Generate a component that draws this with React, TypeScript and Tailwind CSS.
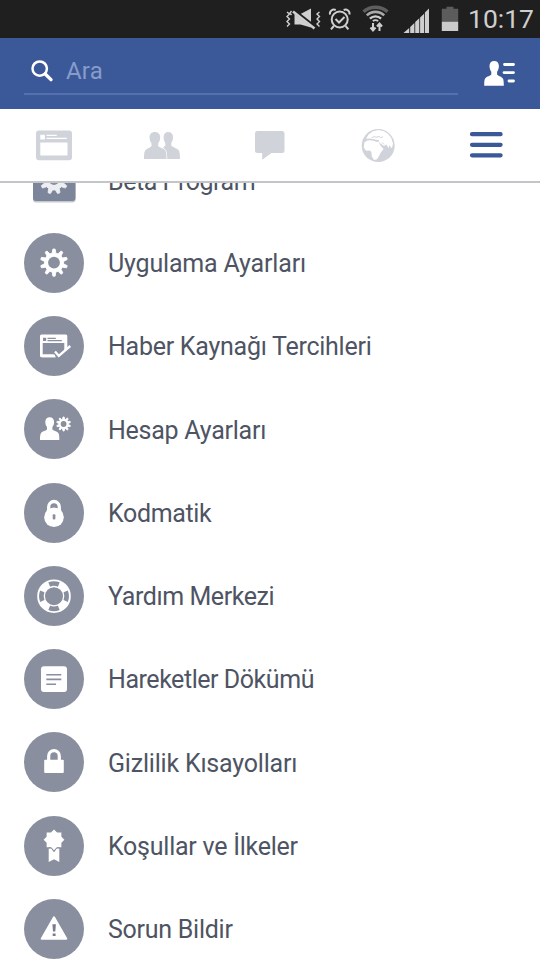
import type { ReactNode } from "react";

interface GearProps {
    cx: number;
    cy: number;
    outer: number;
    body: number;
    hole: number;
    teeth: number;
    color?: string;
}

const point = (cx: number, cy: number, r: number, a: number) =>
    `${(cx + r * Math.sin(a)).toFixed(2)},${(cy - r * Math.cos(a)).toFixed(2)}`;

function Gear({ cx, cy, outer, body, hole, teeth, color = "#fff" }: GearProps) {
    const step = (Math.PI * 2) / teeth;
    const points: string[] = [];
    for (let i = 0; i < teeth; i++) {
        const a = i * step;
        points.push(point(cx, cy, body, a - step * 0.3));
        points.push(point(cx, cy, outer, a - step * 0.13));
        points.push(point(cx, cy, outer, a + step * 0.13));
        points.push(point(cx, cy, body, a + step * 0.3));
    }
    return <g>
        <polygon points={points.join(" ")} fill={color} stroke={color} strokeWidth="0.9" strokeLinejoin="round" />
        <circle cx={cx} cy={cy} r={hole} fill="#898f9e" />
    </g>
}

function Star() {
    const points = Array.from({ length: 16 }, (_, i) => point(30, 23.8, i % 2 ? 8 : 10.4, (i * Math.PI) / 8));
    return <polygon points={points.join(" ")} fill="#fff" />
}

interface Item {
    label: string;
    tracking: string;
    icon: ReactNode;
}

const items: Item[] = [
    {
        label: "Uygulama Ayarları",
        tracking: "tracking-[-0.17px]",
        icon: <Gear cx={30} cy={29.6} outer={13.6} body={9.6} hole={5.9} teeth={10} />,
    },
    {
        label: "Haber Kaynağı Tercihleri",
        tracking: "tracking-[-0.26px]",
        icon: <>
            <rect x="16" y="18.6" width="27.3" height="22.7" rx="1.5" fill="#fff" />
            <path d="M18.7 27h21.6v11.6H18.7zM19 21.8h3.2V25H19zM23.5 21.7h8.3v1.2h-8.3zM23.5 24.1h14.3v1.2H23.5z" fill="#898f9e" />
            <path d="M29.5 34l5.2 5.8L47 29.4V37L41 43h-9z" fill="#898f9e" />
            <path d="M31 35.4l3.8 4.4L46.3 30" fill="none" stroke="#fff" strokeWidth="2.3" />
            <path d="M18 41.3h13.8l-2.4-2.7H18z" fill="#fff" />
        </>,
    },
    {
        label: "Hesap Ayarları",
        tracking: "tracking-[-0.25px]",
        icon: <>
            <path d="M25.7 18.2c2.7 0 4.4 1.7 4.4 4.6 0 2.4-.8 4.2-1.7 5.3v2.4c.4 1 4.500 1.700 5.900 3.500 1 1.300 1 4.600 1 7H16c0-2.400 0-5.700 1.100-7 1.400-1.800 5.500-2.500 5.900-3.500v-2.400c-.9-1.100-1.700-2.900-1.700-5.300 0-2.900 1.700-4.600 4.400-4.600z" fill="#fff" />
            <Gear cx={39.6} cy={25} outer={7} body={5} hole={2.9} teeth={10} />
        </>,
    },
    {
        label: "Kodmatik",
        tracking: "tracking-[-0.36px]",
        icon: <>
            <path d="M24.7 29v-5.2a5.3 5.3 0 0 1 10.6 0V29" fill="none" stroke="#fff" strokeWidth="3.3" />
            <circle cx="30" cy="34.3" r="9.8" fill="#fff" />
            <rect x="28.7" y="31.3" width="2.7" height="5.2" rx="1" fill="#898f9e" />
        </>,
    },
    {
        label: "Yardım Merkezi",
        tracking: "tracking-[-0.42px]",
        icon: <>
            <circle cx="30" cy="30.2" r="12.9" fill="none" stroke="#fff" strokeWidth="7.8" />
            {[0, 90, 180, 270].map((angle) => (
                <path key={angle} d="M25.2 18.5a12.6 12.6 0 0 1 9.6 0" transform={`rotate(${angle} 30 30.2)`} fill="none" stroke="#898f9e" strokeWidth="4.6" />
            ))}
        </>,
    },
    {
        label: "Hareketler Dökümü",
        tracking: "tracking-[-0.45px]",
        icon: <>
            <rect x="17" y="17.3" width="26" height="25.6" rx="3" fill="#fff" />
            <path d="M22.3 25.7h15M22.3 30.4h15M22.3 35.2h9.7" stroke="#898f9e" strokeWidth="1.6" />
        </>,
    },
    {
        label: "Gizlilik Kısayolları",
        tracking: "tracking-[-0.2px]",
        icon: <>
            <path d="M24.7 28.5v-4.6a5.3 5.3 0 0 1 10.6 0v4.6" fill="none" stroke="#fff" strokeWidth="3.2" />
            <rect x="20.2" y="27.7" width="19.6" height="13.4" rx="1" fill="#fff" />
        </>,
    },
    {
        label: "Koşullar ve İlkeler",
        tracking: "tracking-[-0.25px]",
        icon: <>
            <Star />
            <path d="M24.7 32.4l2.5-.2L30 36l2.8-3.8 2.500.2V46L30 43.200 24.700 46z" fill="#fff" />
            <path d="M24.400 32l2.800-.2 2.800 3.700 2.800-3.700 2.800.2" fill="none" stroke="#898f9e" strokeWidth="0.900" />
        </>,
    },
    {
        label: "Sorun Bildir",
        tracking: "tracking-[-0.26px]",
        icon: <>
            <path d="M30 18.3l12.3 21.4H17.7z" fill="#fff" stroke="#fff" strokeWidth="2" strokeLinejoin="round" />
            <path d="M28.4 25.3h3.5l-.6 7.2H29zM28.7 34.4h2.9v2.7h-2.9z" fill="#777d8c" />
        </>,
    },
];

function StatusBar() {
    return <div className="flex h-[38px] shrink-0 items-start bg-[#1f1f1f] pl-[284px] text-[#cfcfcf]">
        <svg className="shrink-0" width="40" height="38" viewBox="284 0 40 38" fill="none" stroke="currentColor">
            <path d="M287 12l2.5 2-2.5 2.5 2.5 2.5-2.5 2.5 2.5 2.5-2.5 2.5M291.500 11l-1.500 2 1.500 2M319.500 12l-2.500 2 2.500 2.500-2.500 2.500 2.500 2.500-2.500 2.500 2.500 2.500" strokeWidth="1.4" />
            <path d="M294.5 14h6l10.500-5.500v19l-10.500-3h-6z" fill="currentColor" stroke="none" />
            <path d="M293.5 10.500l21 16.500" stroke="#1f1f1f" strokeWidth="4" />
            <path d="M293 11.500l21.500 17" strokeWidth="2.6" />
        </svg>
        <svg className="ml-1 shrink-0" width="24" height="38" viewBox="328 0 24 38" fill="none" stroke="currentColor" strokeWidth="2">
            <circle cx="339.7" cy="19.5" r="8" />
            <path d="M335.5 19l3.5 3.500 5.500-5.500M333.800 26l-2.800 3.300M345.600 26l2.800 3.300" />
            <path d="M330 14.500a4 4 0 0 1 5.700-4.500M349.400 14.500a4 4 0 0 0-5.700-4.500" />
        </svg>
        <svg className="ml-2 shrink-0" width="32" height="38" viewBox="360 0 32 38" fill="none" stroke="currentColor">
            <path d="M363.5 11.8a18 18 0 0 1 24 0" stroke="#5e5e5e" strokeWidth="3.4" />
            <path d="M366.8 15.4a12.5 12.5 0 0 1 17.4 0" stroke="#aaa" strokeWidth="2.6" />
            <path d="M369.9 18.6a8 8 0 0 1 11.2 0" strokeWidth="2.3" />
            <path d="M372.8 21q2.700-1.800 5.400 0" strokeWidth="1.8" />
            <path d="M373 23v7M370.5 27.500l2.500 3 2.500-3M379.500 31v-7M377 26.500l2.500-3 2.500 3" strokeWidth="2" />
        </svg>
        <svg className="ml-[11px] shrink-0" width="28" height="38" viewBox="403 0 28 38">
            <path d="M403.5 33l5.700-5v5zM410.200 27l4.200-4v10h-4.200zM415.200 22l4.100-3.700V33h-4.100zM420.100 17.500l4-3.700V33h-4zM424.900 12.500l4.100-4V33h-4.100z" fill="currentColor" />
        </svg>
        <svg className="ml-[10px] shrink-0" width="20" height="38" viewBox="441 0 20 38">
            <path d="M446.500 6.800h7v2h4.700V22h-16.400V8.800h4.700z" fill="#5c5c5c" />
            <path d="M441.800 21.800h16.400V31h-16.400z" fill="#cbcbcb" />
        </svg>
        <span className="ml-[7px] text-[26.5px] leading-[38px]">10:17</span>
    </div>
}

function SearchHeader() {
    return <header className="flex h-[71px] shrink-0 items-start bg-[#3b5998] pl-6">
        <div className="mt-3 flex h-[45px] w-[434px] items-start border-b-2 border-[#5470ad]">
            <svg width="42" height="44" viewBox="24 50 42 44" fill="none" stroke="#fff">
                <circle cx="39.7" cy="68.6" r="7.2" strokeWidth="2.5" />
                <path d="M45.200 74l5.800 5.600" strokeWidth="3.4" strokeLinecap="round" />
            </svg>
            <span className="text-[24px] leading-[43px] tracking-[0.2px] text-[#869ccb]">Ara</span>
        </div>
        <svg className="ml-6" width="36" height="71" viewBox="482 38 36 71" fill="#fff">
            <path d="M494.200 61c3 0 4.700 1.900 4.700 5 0 2.500-.9 4.500-1.800 5.700v2.800c.5 1.200 4.200 2 5.600 3.800 1.100 1.300 1.100 5 1.100 7.400h-19.600c0-2.400 0-6.100 1.100-7.400 1.400-1.800 5.500-2.600 6-3.800v-2.800c-.9-1.200-1.800-3.200-1.800-5.700 0-3.100 1.700-5 4.700-5z" />
            <path d="M504.500 64.500h9M504 72.600h9.500M509 81h4.500" stroke="#fff" strokeWidth="2.8" strokeLinecap="round" />
        </svg>
    </header>
}

function NavTabs() {
    return <nav className="grid h-[74px] shrink-0 grid-cols-5 border-b-2 border-[#c4c5c8] bg-white">
        <svg width="108" height="72" viewBox="0 109 108 72">
            <rect x="36" y="130.5" width="36" height="29.8" rx="3" fill="#d1d3da" />
            <path d="M40.3 142.4h27.2v13.2H40.3zM40.300 134.700h4.600v4.700h-4.600zM46.500 134.800h10.300v1.200H46.500zM46.500 137.700h20.300v1.300H46.500z" fill="#fff" />
        </svg>
        <svg width="108" height="72" viewBox="108 109 108 72" fill="#d1d3da">
            <path d="M168.300 132c3 0 4.700 2 4.700 5 0 2.700-.8 4.600-1.700 5.900v2.600c.5 1.400 5.700 2.600 7.300 4.600 1.200 1.500 1.400 6 1.400 8.800h-15z" />
            <path d="M168.300 132c-3 0-4.700 2-4.700 5 0 2.700.8 4.600 1.700 5.900v2.600l-2 2 2.500 11.500h5z" />
            <path d="M154.800 132c3.400 0 5.400 2.100 5.400 5.600 0 2.500-1 4.500-2 5.700v2.700c.6 1.400 5.700 2.500 7.100 4.400 1.200 1.500 1.200 5.800 1.200 8.600H144c0-2.800 0-7.100 1.300-8.600 1.500-1.900 5.600-3 6.200-4.400v-2.700c-1-1.200-2-3.200-2-5.700 0-3.500 2-5.600 5.300-5.600z" stroke="#fff" strokeWidth="1.4" paintOrder="stroke" />
        </svg>
        <svg width="108" height="72" viewBox="216 109 108 72" fill="#d1d3da">
            <path d="M257.500 131h24.500q2.500 0 2.500 2.500v17q0 2.500-2.500 2.500h-10.500l-9.300 6.800V153h-4.700q-2.500 0-2.500-2.500v-17q0-2.500 2.500-2.500z" />
        </svg>
        <svg width="108" height="72" viewBox="324 109 108 72">
            <circle cx="378.2" cy="145.6" r="16.5" fill="#d1d3da" />
            <path d="M366 138.800l2.500-4.300 4.500-3.200 5-1.200 5.500.9 4.500 2.700 3.300 4.300 1.700 5.500-.8 4-1.200.500-1.200-3-1.300 3-2.200-3.500-2.300 1.500-4.500-3.200-2-2.800-4.500-.7-3-.8z" fill="#fff" />
            <path d="M364.300 142.500l3-2 5.700-.4 2.300 1.500 3.300.5 2.200 4 2.800 2.800-2.600 3.300-1.700 3.300-2.300 3.700-3 .7-2.200-3.700-.4-4.200-1.800-1.500-3.500.3-2.300-3z" fill="#fff" />
            <path d="M371.500 137.800l3-1.300 1.500.8 3-.8 1.500 1 2.500-.6M382 142.500l2 2M371 139.900l8 .8" fill="none" stroke="#d1d3da" strokeWidth="1" />
        </svg>
        <svg width="108" height="72" viewBox="432 109 108 72">
            <path d="M472 134.200h28.600M472 144.800h28.600M472 155.300h28.600" stroke="#3b5998" strokeWidth="4.2" strokeLinecap="round" />
        </svg>
    </nav>
}

export default function App() {
    return <div className="flex h-[960px] w-[540px] flex-col overflow-hidden bg-white font-['Roboto',sans-serif]">
        <StatusBar />
        <SearchHeader />
        <NavTabs />
        <main className="min-h-0 flex-1 overflow-hidden text-[25px] text-[#4e5463]">
            {/* scrolled list, the first row is partly under the tabs */}
            <div className="-mt-[45px] flex h-[83.25px] items-center gap-6 pl-6">
                <svg width="60" height="60" viewBox="0 0 60 60">
                    <rect x="9" y="10" width="42.5" height="42.5" rx="3" fill="#c5c8d0" />
                    <rect x="9" y="9" width="42.5" height="42" rx="3" fill="#7d859a" />
                    <Gear cx={30} cy={30} outer={14} body={10} hole={5} teeth={9} color="#eceef2" />
                </svg>
                <span className="pt-1 tracking-[-0.45px]">Beta Program</span>
            </div>
            {items.map(({ label, tracking, icon }) => (
                <div key={label} className="flex h-[83.25px] items-center gap-6 pl-6">
                    <svg className="shrink-0 rounded-full bg-[#898f9e]" width="60" height="60" viewBox="0 0 60 60">
                        {icon}
                    </svg>
                    <span className={`pt-0.5 ${tracking}`}>{label}</span>
                </div>
            ))}
        </main>
    </div>
}
